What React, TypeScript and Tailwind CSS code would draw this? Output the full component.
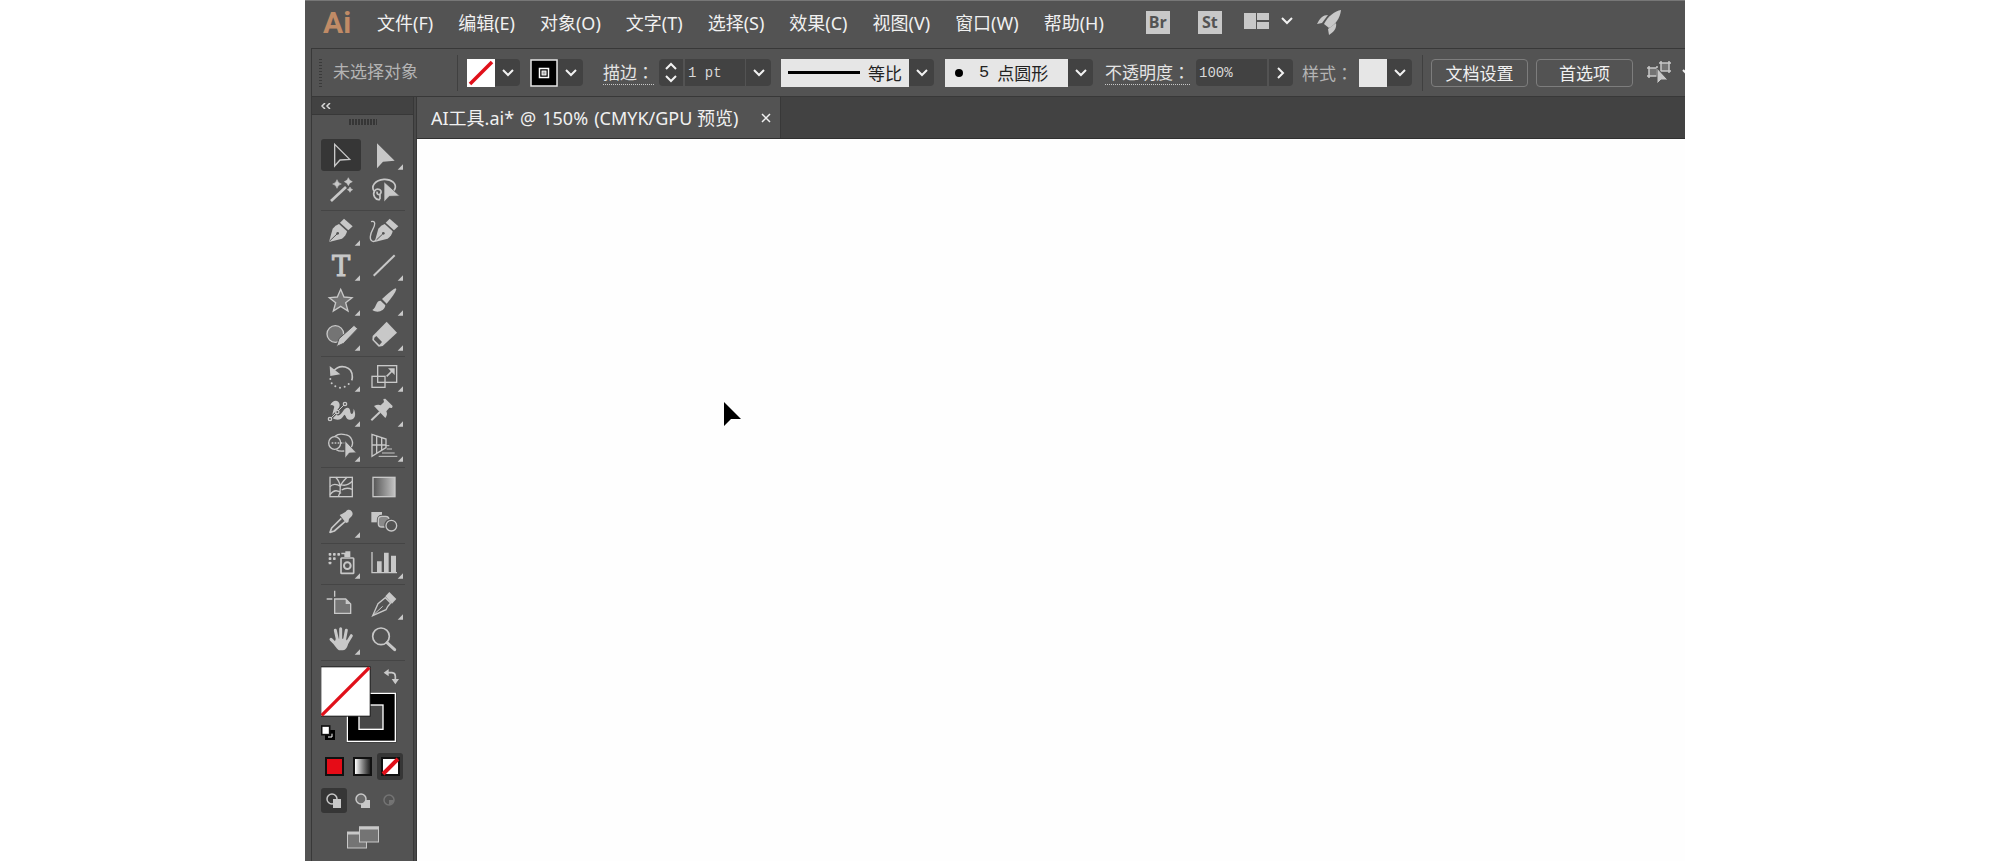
import type { ReactNode } from "react";

const LIGHT = "#c8c8c8";
const PANEL = "#535353";
const MID = "#747474";

const menus = [
  "文件(F)",
  "编辑(E)",
  "对象(O)",
  "文字(T)",
  "选择(S)",
  "效果(C)",
  "视图(V)",
  "窗口(W)",
  "帮助(H)",
];

type Tool = {
  name: string;
  icon: ReactNode;
  flyout?: boolean;
  active?: boolean;
};

const sparkle = (x: number, y: number, r: number) => (
  <path
    d={`M${x} ${y - r}Q${x + r / 5} ${y - r / 5} ${x + r} ${y}Q${x + r / 5} ${y + r / 5} ${x} ${y + r}Q${x - r / 5} ${y + r / 5} ${x - r} ${y}Q${x - r / 5} ${y - r / 5} ${x} ${y - r}Z`}
    fill={LIGHT}
    stroke={LIGHT}
    strokeWidth="1.5"
  />
);

const nib = (
  <>
    <path d="M24 87L35 47Q43 36 54 33L78 55Q76 68 63 77Z" fill={LIGHT} />
    <path d="M57 29L69 17L95 40L82 52Z" fill={LIGHT} />
    <path d="M25 85L48 63" stroke={PANEL} strokeWidth="3" />
    <circle cx="50" cy="61" r="4" fill={PANEL} />
  </>
);

// Every tool icon is drawn on a 120 x 105 grid
const toolGroups: Tool[][] = [
  [
    {
      name: "选择工具",
      active: true,
      icon: <path d="M41 22V87L57 69L86 67Z" fill="none" stroke={LIGHT} strokeWidth="4" />,
    },
    {
      name: "直接选择工具",
      flyout: true,
      icon: <path d="M39 19V94L57 74L92 71Z" fill={LIGHT} />,
    },
    {
      name: "魔棒工具",
      icon: (
        <>
          <path d="M30 87L75 45" stroke={LIGHT} strokeWidth="8" />
          {sparkle(48, 36, 13)}
          {sparkle(82, 29, 12)}
          {sparkle(87, 53, 8)}
        </>
      ),
    },
    {
      name: "套索工具",
      icon: (
        <>
          <path
            d="M32 60C18 42 34 24 60 22C84 21 98 36 93 50Q91 55 87 58M48 82C34 86 24 68 32 56C40 46 56 54 50 64C46 72 36 66 40 59M48 66V82"
            fill="none"
            stroke={LIGHT}
            strokeWidth="5"
          />
          <path d="M60 29V90L76 73L107 72Z" fill={LIGHT} stroke={PANEL} strokeWidth="2" />
        </>
      ),
    },
  ],
  [
    { name: "钢笔工具", flyout: true, icon: nib },
    {
      name: "曲率工具",
      icon: (
        <>
          <g transform="translate(8 0)">{nib}</g>
          <path
            d="M21 26C36 22 34 36 26 50C18 64 16 80 24 84Q32 88 38 80"
            fill="none"
            stroke={LIGHT}
            strokeWidth="4"
          />
        </>
      ),
    },
    {
      name: "文字工具",
      flyout: true,
      icon: (
        <text
          x="60"
          y="84"
          textAnchor="middle"
          fontSize="82"
          fontFamily="DejaVu Serif, serif"
          fill={LIGHT}
          stroke={LIGHT}
          strokeWidth="3"
        >
          T
        </text>
      ),
    },
    {
      name: "直线段工具",
      flyout: true,
      icon: <path d="M29 83L92 22" stroke={LIGHT} strokeWidth="6" />,
    },
    {
      name: "星形工具",
      flyout: true,
      icon: (
        <path
          d="M59 19L69 42L93 44L74 59L81 84L59 70L37 84L44 59L25 44L49 42Z"
          fill={MID}
          stroke={LIGHT}
          strokeWidth="4"
        />
      ),
    },
    {
      name: "画笔工具",
      flyout: true,
      icon: (
        <>
          <path d="M95 16Q88 17 54 48L68 62Q94 32 97 19Z" fill={LIGHT} />
          <path d="M50 53C34 54 40 70 25 81C40 92 62 84 64 67Z" fill={LIGHT} />
        </>
      ),
    },
    {
      name: "斑点画笔工具",
      flyout: true,
      icon: (
        <>
          <circle cx="43" cy="48" r="25" fill={MID} stroke={LIGHT} strokeWidth="4" />
          <path d="M99 22L110 32L68 76L46 86L54 62Z" fill={LIGHT} stroke={PANEL} strokeWidth="3" />
        </>
      ),
    },
    {
      name: "橡皮擦工具",
      flyout: true,
      icon: (
        <>
          <path d="M68 11L99 44L56 84L44 86L25 66L26 54Z" fill={LIGHT} />
          <path d="M31 59L37 54L54 72L46 81L30 65Z" fill={PANEL} />
        </>
      ),
    },
  ],
  [
    {
      name: "旋转工具",
      flyout: true,
      icon: (
        <>
          <path d="M26 21L28 51L58 46Z" fill={LIGHT} />
          <path d="M38 36C56 14 94 20 94 54Q94 60 92 64" fill="none" stroke={LIGHT} strokeWidth="5" />
          {[[28, 60], [32, 73], [43, 82], [57, 86], [71, 83], [83, 75]].map(([x, y]) => (
            <circle key={x} cx={x} cy={y} r="3" fill={LIGHT} />
          ))}
        </>
      ),
    },
    {
      name: "比例缩放工具",
      flyout: true,
      icon: (
        <g fill="none" stroke={LIGHT} strokeWidth="4">
          <rect x="41" y="20" width="57" height="50" />
          <rect x="24" y="52" width="39" height="33" />
          <path d="M68 52L84 36" strokeWidth="5" />
          <path d="M72 28H92V48Z" fill={LIGHT} stroke="none" />
        </g>
      ),
    },
    {
      name: "宽度工具",
      flyout: true,
      icon: (
        <>
          <path
            d="M28 34C34 16 54 16 56 32C56 44 46 50 48 62C52 70 62 58 66 52C74 36 88 38 88 54C90 64 98 62 98 44C108 64 100 78 86 77C74 76 76 64 70 62C62 76 52 80 42 76C28 72 36 54 40 38Q36 30 28 34Z"
            fill={LIGHT}
          />
          <path d="M27 75L72 30" stroke={PANEL} strokeWidth="8" />
          <path d="M27 75L72 30" stroke={LIGHT} strokeWidth="3" />
          {[[27, 75], [49, 54], [72, 30]].map(([x, y]) => (
            <circle key={x} cx={x} cy={y} r="5" fill={PANEL} stroke={LIGHT} strokeWidth="4" />
          ))}
        </>
      ),
    },
    {
      name: "操控变形工具",
      flyout: true,
      icon: (
        <>
          <path d="M22 79L48 54" stroke={LIGHT} strokeWidth="6" />
          <path d="M30 36Q42 30 50 34L60 24L58 15L64 14L86 36L84 42L76 41L67 52Q72 62 64 72Z" fill={LIGHT} />
        </>
      ),
    },
    {
      name: "形状生成器工具",
      flyout: true,
      icon: (
        <>
          <path
            d="M42 22Q54 12 72 17A25 25 0 0 1 90 56M46 62Q54 68 70 66"
            fill="none"
            stroke={LIGHT}
            strokeWidth="4"
          />
          <ellipse cx="41" cy="42" rx="18" ry="19" fill="none" stroke={LIGHT} strokeWidth="4" />
          <path d="M32 42H70" stroke={LIGHT} strokeWidth="5" strokeDasharray="5 4" />
          <path d="M72 35V88L85 72L106 71Z" fill={LIGHT} stroke={PANEL} strokeWidth="2" />
        </>
      ),
    },
    {
      name: "透视网格工具",
      flyout: true,
      icon: (
        <g fill="none" stroke={LIGHT} strokeWidth="4">
          <path d="M24 16V82L66 56V30ZM38 20V73M53 25V64M24 48H66" />
          <path d="M64 50H76M68 60H84M54 72H92M44 82H100" strokeWidth="3" />
        </g>
      ),
    },
  ],
  [
    {
      name: "网格工具",
      icon: (
        <g fill="none" stroke={LIGHT} strokeWidth="4">
          <rect x="27" y="22" width="67" height="58" />
          <path d="M44 22C60 38 62 62 52 80M78 22C66 34 60 42 59 48M27 50C36 40 48 42 60 50M62 60C74 52 84 54 94 58M27 74C38 58 52 60 60 70M60 44C72 48 86 42 94 34" />
        </g>
      ),
    },
    {
      name: "渐变工具",
      icon: (
        <>
          <linearGradient id="tool-gradient">
            <stop offset="0" stopColor="#555" />
            <stop offset="1" stopColor="#c4c4c4" />
          </linearGradient>
          <rect x="27" y="22" width="66" height="58" fill="url(#tool-gradient)" stroke={LIGHT} strokeWidth="4" />
        </>
      ),
    },
    {
      name: "吸管工具",
      flyout: true,
      icon: (
        <>
          <path d="M61 40L32 69L27 82L40 78L72 50" fill="none" stroke={LIGHT} strokeWidth="5" strokeLinejoin="round" />
          <path d="M56 30L64 26L74 20C84 6 102 22 92 34L84 42L82 52L75 54Z" fill={LIGHT} />
        </>
      ),
    },
    {
      name: "混合工具",
      icon: (
        <>
          <path d="M22 21H54V52H22Z" fill={LIGHT} />
          <rect x="43" y="34" width="32" height="32" rx="10" fill="#8a8a8a" stroke={PANEL} strokeWidth="9" />
          <rect x="43" y="34" width="32" height="32" rx="10" fill="#8a8a8a" stroke={LIGHT} strokeWidth="4" />
          <circle cx="82" cy="62" r="17" fill={PANEL} stroke={PANEL} strokeWidth="9" />
          <circle cx="82" cy="62" r="16" fill={PANEL} stroke={LIGHT} strokeWidth="4" />
        </>
      ),
    },
  ],
  [
    {
      name: "符号喷枪工具",
      flyout: true,
      icon: (
        <>
          {[[27, 25], [40, 25], [53, 25], [27, 38], [40, 38], [27, 51]].map(([x, y]) => (
            <rect key={`${x}-${y}`} x={x - 4} y={y - 4} width="8" height="8" rx="2" fill={LIGHT} />
          ))}
          <path d="M61 20H73V16H88V33H70V25H61Z" fill={LIGHT} />
          <rect x="60" y="36" width="38" height="46" rx="2" fill="none" stroke={LIGHT} strokeWidth="5" />
          <circle cx="79" cy="59" r="10" fill="none" stroke={LIGHT} strokeWidth="6" />
        </>
      ),
    },
    {
      name: "柱形图工具",
      flyout: true,
      icon: (
        <>
          <path d="M24 18V80H99" fill="none" stroke={LIGHT} strokeWidth="4" />
          <path d="M39 46H53V78H39ZM60 20H74V78H60ZM81 29H96V78H81Z" fill={LIGHT} />
        </>
      ),
    },
  ],
  [
    {
      name: "画板工具",
      icon: (
        <>
          <path d="M17 36H34M41 11V29" stroke={LIGHT} strokeWidth="4" />
          <path d="M41 36H74L89 51V79H41Z" fill={MID} stroke={LIGHT} strokeWidth="4" />
          <path d="M74 36V51H89Z" fill={LIGHT} />
        </>
      ),
    },
    {
      name: "切片工具",
      flyout: true,
      icon: (
        <>
          <path d="M26 86L42 50L64 32L80 48Q70 58 66 68Z" fill="none" stroke={LIGHT} strokeWidth="4" />
          <path d="M26 86L56 58" stroke={LIGHT} strokeWidth="3" />
          <path d="M64 28L76 15L97 36L84 50Z" fill={LIGHT} />
        </>
      ),
    },
    {
      name: "抓手工具",
      flyout: true,
      icon: (
        <>
          <path
            d="M43 25L50 56M59 20V54M76 25L70 56M91 41L76 66M30 52L48 70"
            stroke={LIGHT}
            strokeWidth="9"
            strokeLinecap="round"
          />
          <path d="M45 50H74L82 62Q78 84 66 85H54Q48 82 38 66Z" fill={LIGHT} />
        </>
      ),
    },
    {
      name: "缩放工具",
      icon: (
        <>
          <circle cx="51" cy="43" r="25" fill="none" stroke={LIGHT} strokeWidth="5" />
          <path d="M69 62L92 83" stroke={LIGHT} strokeWidth="9" strokeLinecap="round" />
        </>
      ),
    },
  ],
];

function Chevron({ className = "" }: { className?: string }) {
  return (
    <svg viewBox="0 0 12 8" className={`h-2 w-3 ${className}`} fill="none" stroke="#f2f2f2" strokeWidth="2">
      <path d="M1 1L6 6L11 1" />
    </svg>
  );
}

function DropButton({ label }: { label: string }) {
  return (
    <button
      aria-label={label}
      className="flex h-[27px] w-[25px] shrink-0 items-center justify-center rounded-r bg-[#424242]"
    >
      <Chevron />
    </button>
  );
}

function MenuBar() {
  return (
    <header className="flex h-12 shrink-0 items-center border-t border-[#777] pb-1 pl-[18px] text-lg text-[#f0f0f0]">
      <span className="w-[54px] font-['Liberation_Sans_Narrow',Roboto,sans-serif] text-[30px] leading-8 font-bold text-[#c08b66]">
        Ai
      </span>
      <nav className="flex gap-[25px] whitespace-nowrap">
        {menus.map((menu) => (
          <button key={menu}>{menu}</button>
        ))}
      </nav>
      <div className="ml-[42px] flex items-center font-['Open_Sans',sans-serif] text-base font-bold text-[#535353]">
        <button className="h-[23px] w-6 bg-[#c8c8c8] leading-[23px]">Br</button>
        <button className="ml-7 h-[23px] w-6 bg-[#c8c8c8] leading-[23px]">St</button>
        <button aria-label="排列文档" className="ml-[22px] flex items-center gap-3 pb-1">
          <svg viewBox="0 0 25 16" className="h-4 w-[25px]" fill={LIGHT}>
            <path d="M0 0H12V16H0ZM13 0H25V7H13ZM13 9H25V16H13Z" />
          </svg>
          <Chevron />
        </button>
        <button aria-label="使用 GPU 预览查看" className="ml-6">
          <svg viewBox="0 0 24 25" className="h-[25px] w-6" fill={LIGHT}>
            <path d="M24 0C18 1 11 6 7 14L12 18C19 14 23 8 24 0Z" />
            <path d="M11 5C6 5 3 8 0 14L5 13ZM19 13L11 19L12 25C17 22 20 18 19 13Z" />
          </svg>
        </button>
      </div>
    </header>
  );
}

function ControlBar() {
  return (
    <div className="flex h-[49px] shrink-0 items-center overflow-hidden border-y border-[#383838] pl-[7px] font-['Noto_Sans_CJK_TC',sans-serif] text-[17px] whitespace-nowrap text-[#d8d8d8]">
      <div className="h-7 w-[3px] shrink-0 bg-[repeating-linear-gradient(#3a3a3a_0_1px,transparent_1px_3px)]" />
      <span className="ml-[11px] w-[124px] shrink-0 pb-1 font-['Noto_Sans_CJK_SC',sans-serif] text-[#b4b4b4]">
        未选择对象
      </span>
      <div className="h-9 w-px shrink-0 bg-[#404040]" />

      <button aria-label="填色" className="ml-[9px] shrink-0">
        <svg viewBox="0 0 28 28" className="size-7">
          <rect width="28" height="28" fill="#fff" />
          <path d="M3 25L25 3" stroke="#e0101a" strokeWidth="3.5" />
        </svg>
      </button>
      <DropButton label="填色选项" />
      <button aria-label="描边颜色" className="ml-[10px] shrink-0">
        <svg viewBox="0 0 28 28" className="size-7">
          <rect x="1" y="1" width="26" height="26" stroke="#e4e4e4" strokeWidth="1.5" />
          <rect x="9.5" y="9.5" width="9" height="9" fill="none" stroke="#fff" strokeWidth="1.5" />
          <rect x="12" y="12" width="4" height="4" fill="#aaa" stroke="#fff" />
        </svg>
      </button>
      <DropButton label="描边颜色选项" />

      <label
        htmlFor="stroke"
        className="ml-5 shrink-0 border-b border-dotted border-[#c8c8c8] leading-6 text-[#e4e4e4]"
      >
        <span lang="zh-Hans" className="font-['Noto_Sans_CJK_SC',sans-serif]">描边</span>：
      </label>
      <div className="ml-[5px] flex h-[27px] w-6 shrink-0 flex-col items-center justify-between rounded-l bg-[#424242] py-[3px]">
        <button aria-label="增加"><Chevron className="block rotate-180" /></button>
        <button aria-label="减少"><Chevron className="block" /></button>
      </div>
      <input
        id="stroke"
        defaultValue="1 pt"
        className="ml-0.5 h-[27px] w-[60px] shrink-0 bg-[#424242] px-[3px] font-['Liberation_Mono',monospace] text-sm outline-none"
      />
      <div className="ml-px flex shrink-0"><DropButton label="描边粗细" /></div>

      <button className="ml-[10px] flex h-7 w-32 shrink-0 items-center justify-between bg-[#e6e6e6] px-[7px] font-['Noto_Sans_CJK_SC',sans-serif] text-[#222]">
        <span className="h-[3px] w-[72px] bg-black" />
        等比
      </button>
      <DropButton label="变量宽度配置文件" />
      <button className="ml-[11px] flex h-7 w-[123px] shrink-0 items-center bg-[#e6e6e6] pl-[10px] text-[#222]">
        <span className="size-2 rounded-full bg-black" />
        <span className="ml-4 font-['Liberation_Mono',monospace]">5</span>
        <span className="ml-2 font-['Noto_Sans_CJK_SC',sans-serif]">点圆形</span>
      </button>
      <DropButton label="画笔定义" />

      <label
        htmlFor="opacity"
        className="ml-3 shrink-0 border-b border-dotted border-[#c8c8c8] leading-6 text-[#e4e4e4]"
      >
        <span lang="zh-Hans" className="font-['Noto_Sans_CJK_SC',sans-serif]">不透明度</span>：
      </label>
      <input
        id="opacity"
        defaultValue="100%"
        className="ml-[6px] h-[27px] w-[71px] shrink-0 rounded-l bg-[#424242] px-[3px] font-['Liberation_Mono',monospace] text-sm outline-none"
      />
      <button
        aria-label="不透明度选项"
        className="ml-0.5 flex h-[27px] w-6 shrink-0 items-center justify-center rounded-r bg-[#424242]"
      >
        <Chevron className="-rotate-90" />
      </button>
      <span className="ml-[9px] shrink-0 text-[#b4b4b4]">
        <span lang="zh-Hans" className="font-['Noto_Sans_CJK_SC',sans-serif]">样式</span>：
      </span>
      <button aria-label="图形样式" className="ml-[6px] size-7 shrink-0 bg-[#e6e6e6]" />
      <DropButton label="图形样式选项" />
      <div className="ml-[10px] h-9 w-px shrink-0 bg-[#404040]" />
      <button className="mx-2 h-7 w-[97px] shrink-0 rounded border border-[#7d7d7d] font-['Noto_Sans_CJK_SC',sans-serif] leading-6 text-[#f0f0f0]">
        文档设置
      </button>
      <button className="h-7 w-[97px] shrink-0 rounded border border-[#7d7d7d] font-['Noto_Sans_CJK_SC',sans-serif] leading-6 text-[#f0f0f0]">
        首选项
      </button>
      <button aria-label="选择类似的对象" className="ml-[14px] flex shrink-0 items-center gap-[10px]">
        <svg viewBox="0 0 25 24" className="h-6 w-[25px]" fill="none" stroke={LIGHT} strokeWidth="1.5">
          <path d="M2 7H10V15H2ZM0 7H2M0 15H2M2 5V7M2 15V17M10 5V7M14 2H22V10H14ZM12 2H14M22 2H24M14 0V2M22 0V2M22 10H24M22 10V12" fill={MID} />
          <path d="M10 7V23L14 19H21Z" fill={LIGHT} stroke={PANEL} strokeWidth="1" />
        </svg>
        <Chevron />
      </button>
    </div>
  );
}

function ToolButton({ tool }: { tool: Tool }) {
  return (
    <div className="flex h-[35px] w-10 items-center">
      <button
        aria-label={tool.name}
        className={`flex h-8 w-10 items-center rounded-[3px] ${tool.active ? "bg-[#363636]" : ""}`}
      >
        <svg viewBox="0 0 120 105" className="h-[35px] w-10 shrink-0">
          {tool.icon}
          {tool.flyout && <path d="M117 82V98H101Z" fill={LIGHT} />}
        </svg>
      </button>
    </div>
  );
}

function ColorControls() {
  return (
    <>
      <svg viewBox="63 24 249 249" className="h-[83px] w-[83px]" role="img" aria-label="填色和描边">
        <rect x="139" y="112" width="150" height="150" fill="#222" />
        <rect x="142" y="115" width="144" height="144" stroke="#fff" strokeWidth="4" />
        <rect x="177" y="150" width="72" height="73" fill="#484848" stroke="#fff" strokeWidth="4" />
        <rect x="61" y="34" width="151" height="151" fill="#222" />
        <rect x="64" y="37" width="145" height="145" fill="#fff" />
        <path d="M65 181L208 38" stroke="#e0101a" strokeWidth="10" />
        <path d="M264 53H276Q286 54 286 64V76" fill="none" stroke={LIGHT} strokeWidth="5" />
        <path d="M251 53L266 42V64ZM286 88L275 72H297Z" fill={LIGHT} />
        <rect x="78" y="228" width="24" height="24" stroke="#000" strokeWidth="6" />
        <path d="M96 236V246H84" fill="none" stroke="#fff" strokeWidth="3" />
        <rect x="65" y="213" width="24" height="26" fill="#fff" stroke="#111" strokeWidth="5" />
      </svg>
      <div className="mt-[7px] flex gap-0.5">
        <button aria-label="颜色" className="flex h-[27px] w-[26px] items-center justify-center">
          <span className="size-[19px] border-2 border-[#111] bg-[#e60c17]" />
        </button>
        <button aria-label="渐变" className="flex h-[27px] w-[26px] items-center justify-center">
          <span className="size-[19px] border-2 border-[#111] bg-linear-to-r from-white to-[#222]" />
        </button>
        <button aria-label="无" className="flex h-[27px] w-[26px] items-center justify-center rounded-[3px] bg-[#363636]">
          <svg viewBox="0 0 19 19" className="size-[19px]">
            <rect x="1" y="1" width="17" height="17" fill="#fff" stroke="#111" strokeWidth="2" />
            <path d="M2 17L17 2" stroke="#e0101a" strokeWidth="4" />
          </svg>
        </button>
      </div>
      <div className="mt-2 flex gap-0.5">
        <button aria-label="正常绘图" className="flex h-[25px] w-[26px] items-center justify-center rounded-[3px] bg-[#363636]">
          <svg viewBox="0 0 16 16" className="size-4">
            <circle cx="6" cy="6" r="5" fill="none" stroke={LIGHT} strokeWidth="1.5" />
            <path d="M7 6H15V15H7Z" fill={LIGHT} />
          </svg>
        </button>
        <button aria-label="背面绘图" className="flex h-[25px] w-[26px] items-center justify-center">
          <svg viewBox="0 0 16 16" className="size-4">
            <path d="M7 7H16V15H7Z" fill={LIGHT} />
            <circle cx="7" cy="6" r="5" fill="#6a6a6a" stroke={LIGHT} strokeWidth="1.5" />
          </svg>
        </button>
        <button aria-label="内部绘图" className="flex h-[25px] w-[26px] items-center justify-center">
          <svg viewBox="0 0 16 16" className="size-4">
            <circle cx="7" cy="7" r="5" fill="none" stroke={MID} strokeWidth="1.5" />
            <path d="M7 7H12Q11 11 7 12Z" fill={MID} />
          </svg>
        </button>
      </div>
      <button aria-label="更改屏幕模式" className="mt-[13px] ml-[26px] w-8">
        <svg viewBox="0 0 32 23" className="h-[23px] w-8" stroke={LIGHT}>
          <rect x="0.5" y="7" width="19" height="15" fill={MID} />
          <path d="M0 7H20" strokeWidth="3" />
          <rect x="12.5" y="1" width="19" height="15" fill={MID} />
          <path d="M12 2H32" strokeWidth="3" />
        </svg>
      </button>
    </>
  );
}

function ToolPanel() {
  return (
    <aside className="flex w-[102px] shrink-0 flex-col border-r border-[#383838]">
      <button
        aria-label="折叠面板"
        className="flex h-[18px] shrink-0 items-center border-b border-[#383838] bg-[#424242] pl-[9px]"
      >
        <svg viewBox="0 0 10 6" className="h-[6px] w-[10px]" fill="none" stroke="#d8d8d8" strokeWidth="1.5">
          <path d="M4 0L1 3L4 6M9 0L6 3L9 6" />
        </svg>
      </button>
      <div className="mx-auto mt-1 h-[6px] w-7 shrink-0 bg-[repeating-linear-gradient(90deg,#363636_0_2px,transparent_2px_3px)]" />
      <div className="mt-3 pl-[9px]">
        {toolGroups.map((group) => (
          <div key={group[0].name}>
            <div className="flex flex-wrap gap-x-[3px]">
              {group.map((tool) => (
                <ToolButton key={tool.name} tool={tool} />
              ))}
            </div>
            <div className="mr-2 h-[6px] py-[3px]">
              <div className="h-px bg-[#454545]" />
            </div>
          </div>
        ))}
        <ColorControls />
      </div>
    </aside>
  );
}

function Cursor() {
  return (
    <svg viewBox="0 0 17 24" className="absolute top-[263px] left-[307px] h-6 w-[17px]">
      <path d="M0 0V24L7 17H17Z" fill="#000" />
    </svg>
  );
}

export default function App() {
  return (
    <div className="h-screen overflow-hidden bg-white pr-[315px] pl-[305px] font-['Noto_Sans','Noto_Sans_CJK_SC',sans-serif]">
      <div className="flex h-full flex-col bg-[#535353]">
        <MenuBar />
        <div className="flex min-h-0 flex-1 pl-[6px]">
          <div className="flex min-w-0 flex-1 flex-col border-l border-[#383838]">
            <ControlBar />
            <div className="flex min-h-0 flex-1">
              <ToolPanel />
              <div className="w-[3px] shrink-0 border-r border-[#383838] bg-[#484848]" />
              <main className="flex min-w-0 flex-1 flex-col">
                <div className="flex h-[42px] shrink-0 border-b border-[#303030] bg-[#424242]">
                  <div className="flex items-center gap-[22px] border-r border-[#383838] bg-[#535353] pr-[9px] pl-[14px] text-lg whitespace-nowrap text-[#f0f0f0]">
                    <div className="flex gap-[6px]">
                      <span>AI工具.ai*</span>
                      <span>@</span>
                      <span>150%</span>
                      <span>(CMYK/GPU 预览)</span>
                    </div>
                    <button aria-label="关闭">
                      <svg viewBox="0 0 10 10" className="size-[10px]" stroke="#f0f0f0" strokeWidth="1.5">
                        <path d="M1 1L9 9M9 1L1 9" />
                      </svg>
                    </button>
                  </div>
                </div>
                <div className="relative flex-1 bg-[#fefefe]">
                  <Cursor />
                </div>
              </main>
            </div>
          </div>
        </div>
      </div>
    </div>
  );
}
